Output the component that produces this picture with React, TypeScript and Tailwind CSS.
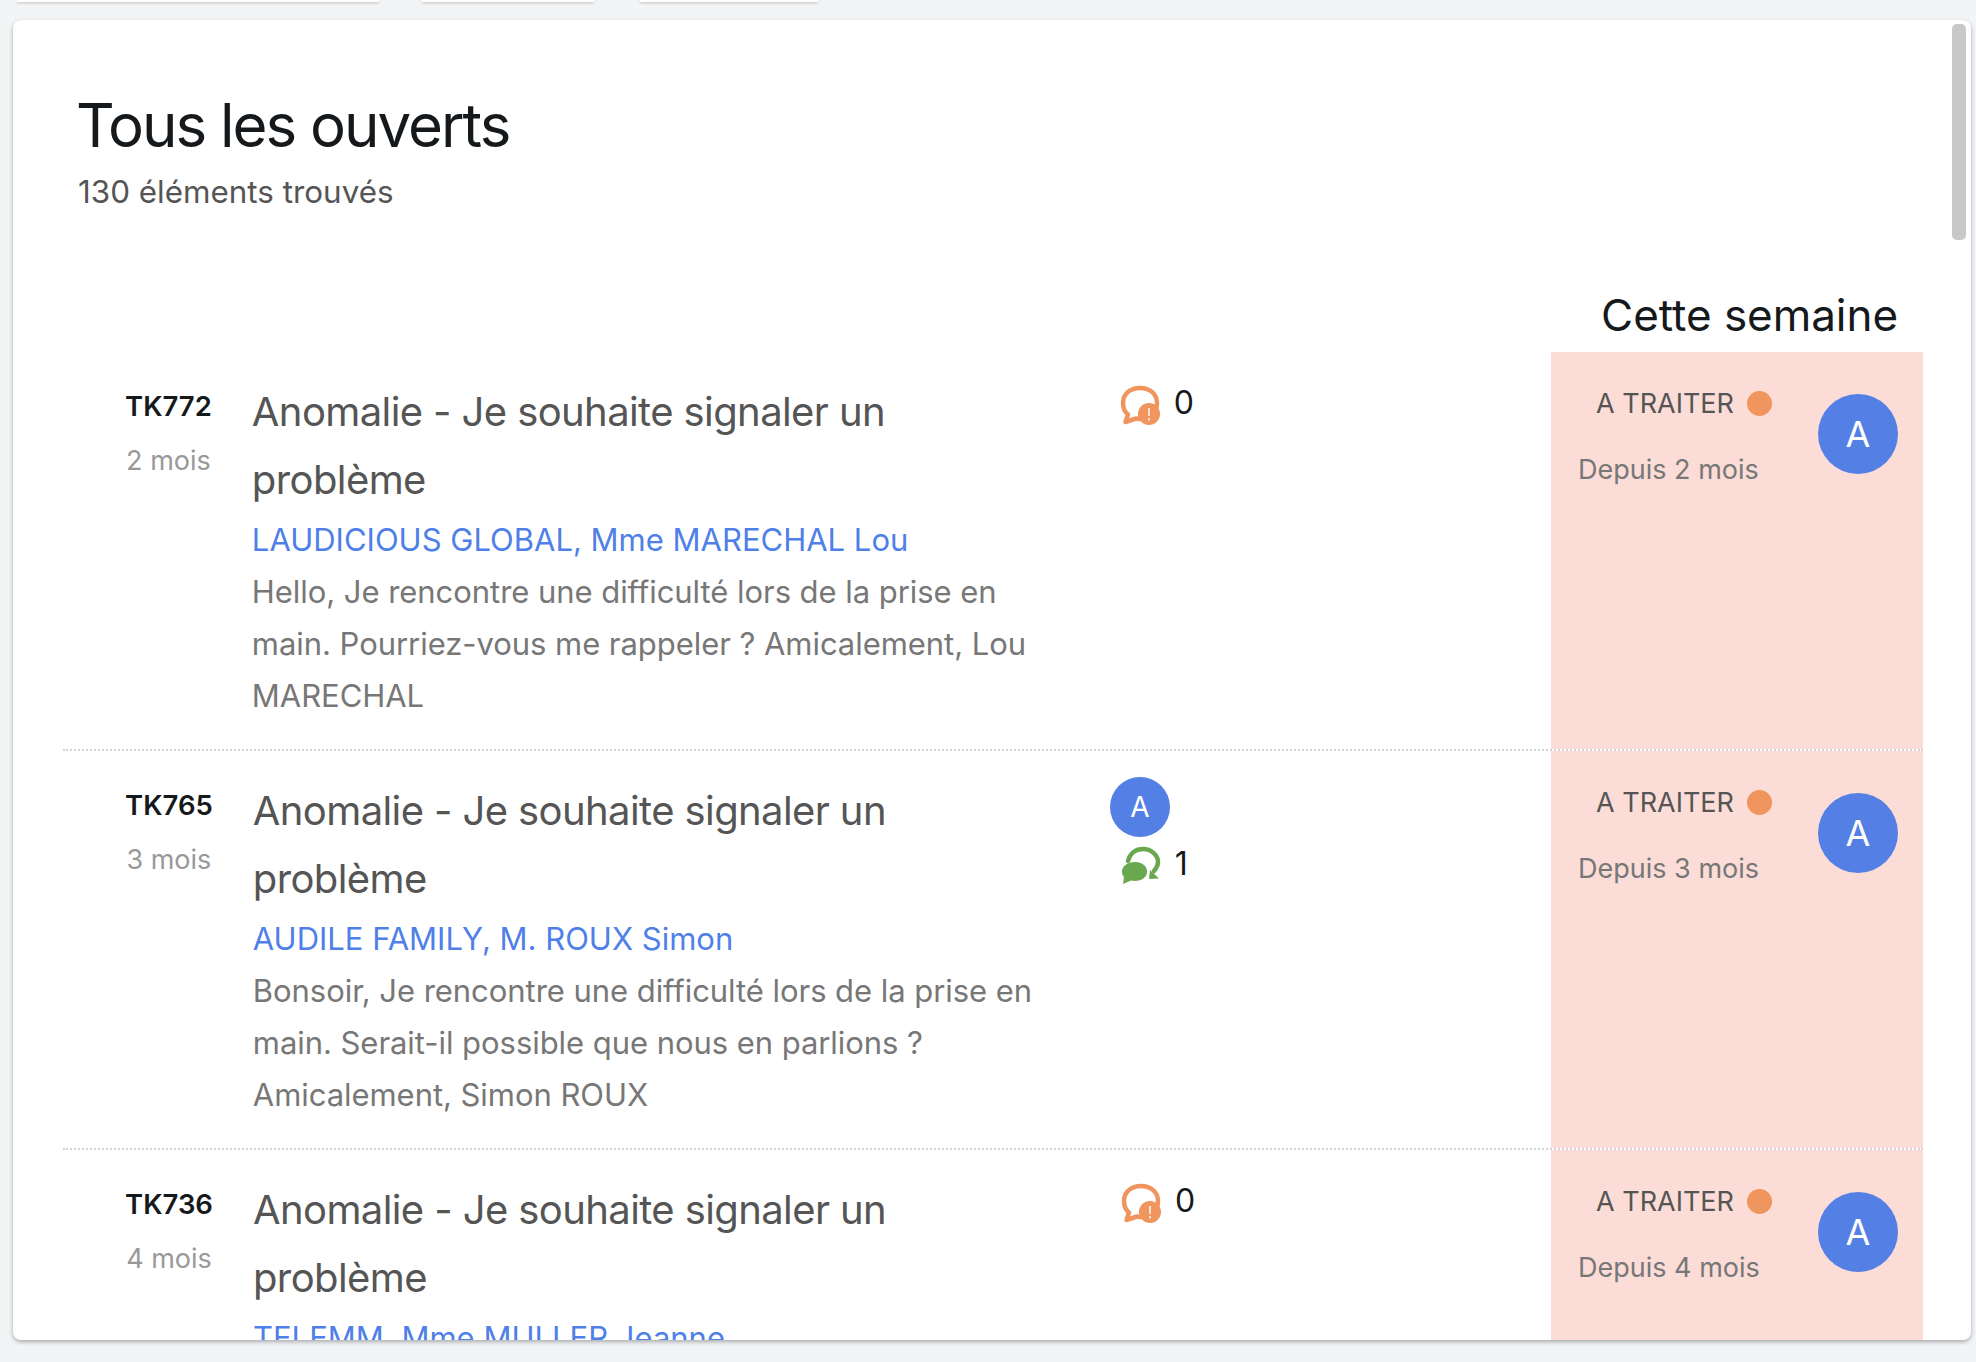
const tickets = [
  {
    id: 'TK772',
    age: '2 mois',
    customer: 'LAUDICIOUS GLOBAL, Mme MARECHAL Lou',
    text: 'Hello, Je rencontre une difficulté lors de la prise en main. Pourriez-vous me rappeler ? Amicalement, Lou MARECHAL',
    count: 0,
    assigned: false,
  },
  {
    id: 'TK765',
    age: '3 mois',
    customer: 'AUDILE FAMILY, M. ROUX Simon',
    text: 'Bonsoir, Je rencontre une difficulté lors de la prise en main. Serait-il possible que nous en parlions ? Amicalement, Simon ROUX',
    count: 1,
    assigned: true,
  },
  {
    id: 'TK736',
    age: '4 mois',
    customer: 'TELEMM, Mme MULLER Jeanne',
    text: 'Bonjour, Je rencontre une difficulté lors de la prise en main.',
    count: 0,
    assigned: false,
  },
];

function OpenBubble() {
  return (
    <svg width="40" height="40" viewBox="0 0 40 40" className="shrink-0">
      <path
        d="M20 3C10 3 3 9 3 18c0 5 2 9 5 11.500L5.500 37 16 33.500c2 .4 3 .5 4 .5 10 0 17-7 17-16S30 3 20 3z"
        fill="none"
        stroke="#ef955d"
        strokeWidth="4.500"
        strokeLinejoin="round"
      />
      <circle cx="29" cy="29" r="11" fill="#ef955d" />
      <rect x="28" y="23" width="2" height="8" fill="#f9e0d0" />
      <rect x="28" y="33" width="2" height="2.500" fill="#f9e0d0" />
    </svg>
  );
}

function ReplyBubble() {
  return (
    <svg width="40" height="40" viewBox="0 0 40 40" className="shrink-0">
      <path
        d="M7 15C9 7 15 3 22 3c8 0 15 6 15 13 0 4-1.500 6-4 9"
        fill="none"
        stroke="#6aa84f"
        strokeWidth="4.500"
        strokeLinecap="round"
      />
      <path d="M29 24l9 8.500-10 .5z" fill="#6aa84f" />
      <path
        d="M14 16c7 0 12 4 12 9.500S21 35 14 35c-1.500 0-3-.2-4-.5L2 38l1-7c-1.500-1.500-2-3.500-2-5.500C1 20 7 16 14 16z"
        fill="#6aa84f"
      />
    </svg>
  );
}

function Avatar({ small }: { small?: boolean }) {
  return (
    <div
      className={
        small
          ? 'w-[60px] h-[60px] rounded-full bg-[#5480e6] text-white flex items-center justify-center text-[28px] shrink-0'
          : 'w-[80px] h-[80px] rounded-full bg-[#5480e6] text-white flex items-center justify-center text-[36px] shrink-0'
      }
    >
      A
    </div>
  );
}

export default function App() {
  return (
    <div className="h-[1362px] overflow-hidden bg-[#f3f4f6] font-['Inter',sans-serif]">
      <div className="flex h-[20px] items-start">
        <div className="ml-[17px] w-[362px] h-[2px] bg-white shadow-[0_1px_3px_rgba(0,0,0,0.25)]" />
        <div className="ml-[43px] w-[172px] h-[2px] bg-white shadow-[0_1px_3px_rgba(0,0,0,0.25)]" />
        <div className="ml-[46px] w-[178px] h-[2px] bg-white shadow-[0_1px_3px_rgba(0,0,0,0.25)]" />
      </div>
      <div className="relative mx-[13px] w-[1958px] h-[1320px] bg-white rounded-[8px] overflow-hidden shadow-[0_2px_4px_rgba(0,0,0,0.3)]">
        <div className="absolute top-[4px] right-[5px] w-[14px] h-[216px] rounded-[5px] bg-[#c8c8c8]" />
        <div className="pl-[65px] pt-[70px]">
          <h1 className="text-[60px] leading-[70px] text-[#16191c] tracking-[-2px] -ml-[2px]">Tous les ouverts</h1>
          <p className="mt-[12px] text-[31.400px] leading-[40px] text-[#555555]">130 éléments trouvés</p>
        </div>
        <div className="mt-[75px] pr-[73px] text-right text-[44px] leading-[56px] tracking-[-0.05px] text-[#16191c]">Cette semaine</div>
        <div className="ml-[50px] mr-[48px] mt-[9px]">
          {tickets.map((t, i) => (
            <div key={t.id} className={i > 0 ? 'flex border-t-2 border-dotted border-[#d4d4d4]' : 'flex'}>
              <div className="flex-1 flex pl-[62px] pt-[26px] pb-[27px]">
                <div className="flex flex-col items-center">
                  <div className="text-[27.500px] leading-[34px] font-semibold text-[#16191c] mt-[11px]">{t.id}</div>
                  <div className="text-[27px] leading-[34px] text-[#999999] mt-[21px]">{t.age}</div>
                </div>
                <div className="w-[800px] ml-[40px]">
                  <div className="text-[40px] leading-[68px] text-[#555555] tracking-[-0.6px]">Anomalie - Je souhaite signaler un problème</div>
                  <div className="text-[31px] leading-[52px] text-[#4f7fe8]">{t.customer}</div>
                  <div className="text-[31px] leading-[52px] text-[#777777] tracking-[-0.05px]">{t.text}</div>
                </div>
                <div className="ml-[57px] flex flex-col items-start">
                  {t.assigned && <Avatar small />}
                  <div className={t.assigned ? 'mt-[9px] ml-[11px] flex items-center gap-[14px]' : 'mt-[7px] ml-[11px] flex items-center gap-[14px]'}>
                    {t.assigned ? <ReplyBubble /> : <OpenBubble />}
                    <span className="text-[32px] leading-[40px] text-[#16191c] -mt-[4px]">{t.count}</span>
                  </div>
                </div>
              </div>
              <div className="w-[372px] bg-[#fbdcd6] flex justify-between pl-[27px] pr-[25px] pt-[42px]">
                <div className="flex flex-col items-start -mt-[8px]">
                  <div className="flex items-center gap-[13px] ml-[18px]">
                    <span className="text-[27px] leading-[36px] text-[#555555]">A TRAITER</span>
                    <span className="w-[25px] h-[25px] rounded-full bg-[#ef955d] -mt-[1px]" />
                  </div>
                  <div className="text-[27px] leading-[36px] text-[#777777] mt-[30px]">Depuis {t.age}</div>
                </div>
                <Avatar />
              </div>
            </div>
          ))}
        </div>
      </div>
    </div>
  );
}
